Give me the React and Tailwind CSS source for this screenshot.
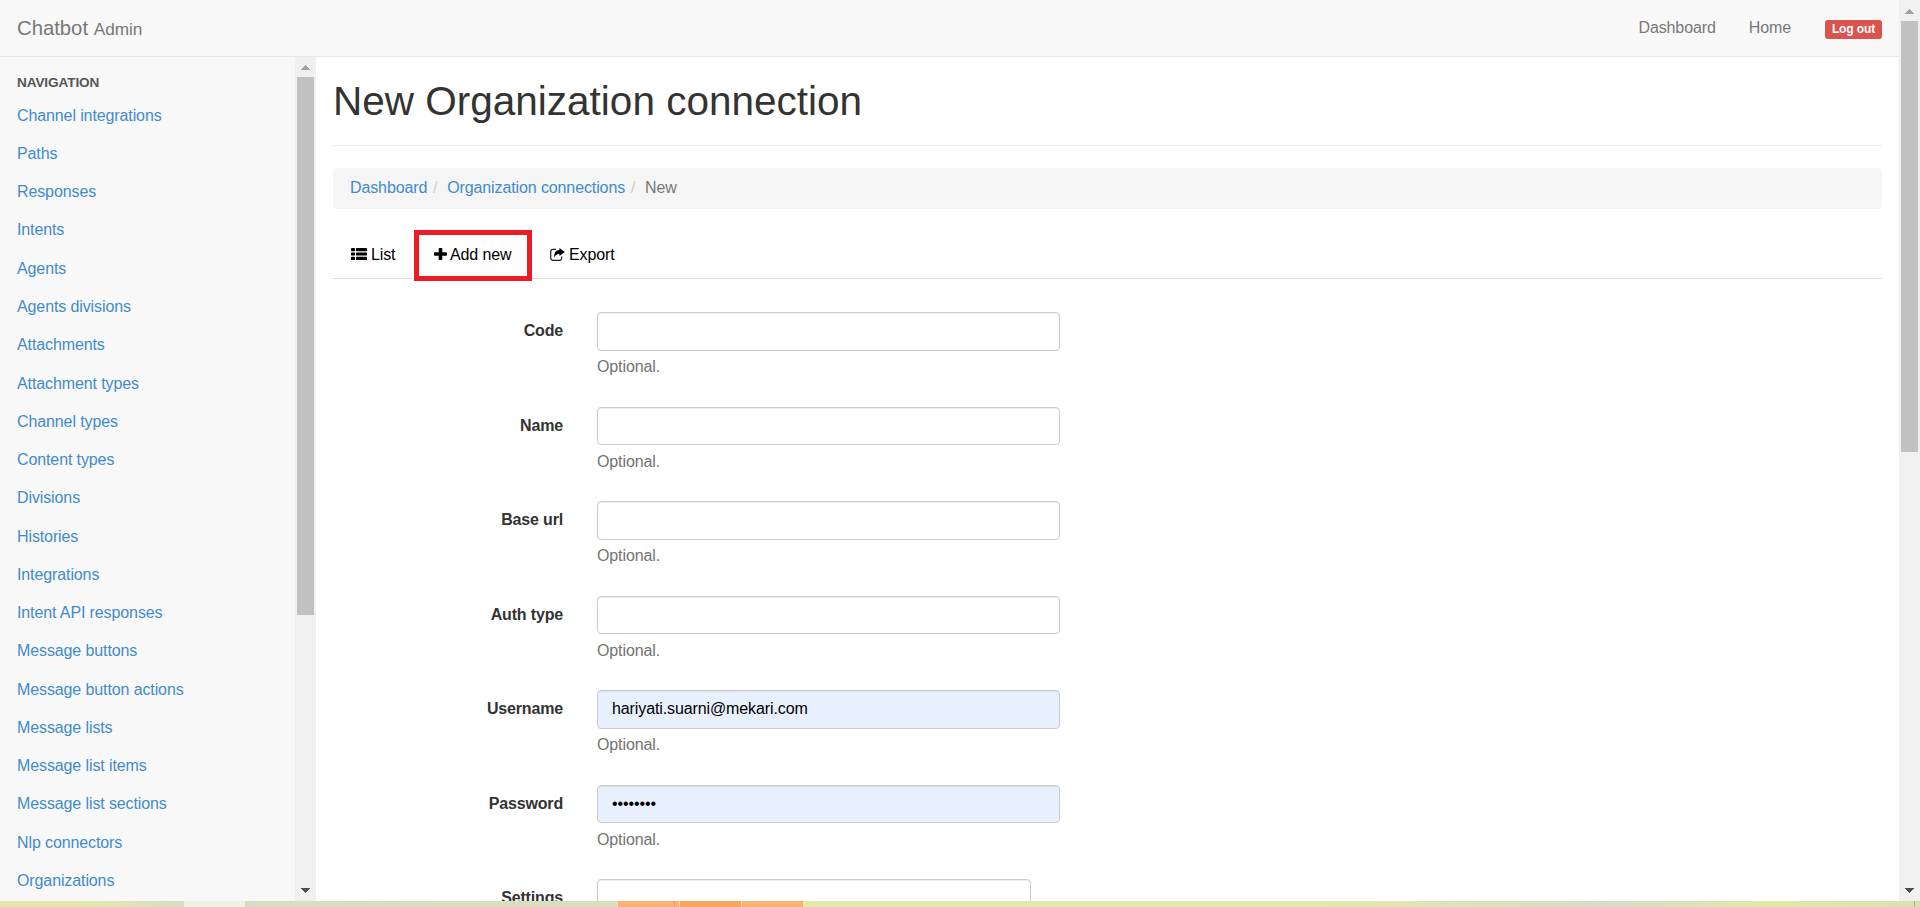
const NAV_ITEMS = [
  'Channel integrations', 'Paths', 'Responses', 'Intents', 'Agents', 'Agents divisions',
  'Attachments', 'Attachment types', 'Channel types', 'Content types', 'Divisions',
  'Histories', 'Integrations', 'Intent API responses', 'Message buttons',
  'Message button actions', 'Message lists', 'Message list items',
  'Message list sections', 'Nlp connectors', 'Organizations',
];

const FIELDS = [
  { label: 'Code' },
  { label: 'Name' },
  { label: 'Base url' },
  { label: 'Auth type' },
  { label: 'Username', type: 'text', value: 'hariyati.suarni@mekari.com' },
  { label: 'Password', type: 'password', value: 'password' },
];

function ScrollArrow({ down }) {
  return (
    <svg width="9" height="5" viewBox="0 0 9 5" className="block" shapeRendering="crispEdges">
      {down ? (
        <path d="M0 0h9v1h-9zM1 1h7v1h-7zM2 2h5v1h-5zM3 3h3v1h-3zM4 4h1v1h-1z" fill="#505050" />
      ) : (
        <path d="M4 0h1v1h-1zM3 1h3v1h-3zM2 2h5v1h-5zM1 3h7v1h-7zM0 4h9v1h-9z" fill="#a3a3a3" />
      )}
    </svg>
  );
}

function Scrollbar({ thumbClass, topClass }) {
  return (
    <div className="flex w-[21px] shrink-0 flex-col items-center bg-[#f0f0f0]">
      <div className={`flex w-full justify-center ${topClass}`}>
        <ScrollArrow />
      </div>
      <div className={`w-[17px] bg-[#c1c1c1] ${thumbClass}`} />
      <div className="mt-auto mb-2">
        <ScrollArrow down />
      </div>
    </div>
  );
}

function ListIcon() {
  return (
    <svg width="16" height="12" viewBox="0 0 16 12" fill="#000">
      <rect x="0" y="0" width="4" height="3.200" rx="0.6" />
      <rect x="5" y="0" width="11" height="3.200" rx="0.6" />
      <rect x="0" y="4.400" width="4" height="3.200" rx="0.6" />
      <rect x="5" y="4.400" width="11" height="3.200" rx="0.6" />
      <rect x="0" y="8.800" width="4" height="3.200" rx="0.6" />
      <rect x="5" y="8.800" width="11" height="3.200" rx="0.6" />
    </svg>
  );
}

function PlusIcon() {
  return (
    <svg width="13" height="12" viewBox="0 0 13 12" fill="#000">
      <path d="M5.500 0h2q.8 0 .8.8v3.400h3.900q.8 0 .8.8v2q0 .8-.8.8H8.300v3.400q0 .8-.8.8h-2q-.8 0-.8-.8V7.800H.8Q0 7.800 0 7V5q0-.8.8-.8h3.900V.8q0-.8.8-.8z" />
    </svg>
  );
}

function ShareIcon() {
  return (
    <svg width="15" height="13" viewBox="0 0 15 13" fill="none">
      <path d="M6 1.300H3.200Q.7 1.300.7 3.800v6q0 2.500 2.500 2.500h6q2.500 0 2.500-2.500V8.600" stroke="#222" strokeWidth="1.200" />
      <path d="M9.400 0l5.400 3.900-5.400 4.200V5.900C7.500 5.800 5.700 6.700 4.400 9.500 3.700 5 5.600 2.300 9.400 2.100z" fill="#000" />
    </svg>
  );
}

export default function App() {
  return (
    <div className="flex h-[907px] w-[1920px] flex-col overflow-hidden bg-white font-['Liberation_Sans',Arial,sans-serif] text-[16px] leading-[22px] tracking-[-0.11px] text-[#333]">
      <div className="flex h-[901px] overflow-hidden">
        <div className="flex w-[1899px] flex-col">
          <header className="flex h-[57px] shrink-0 items-start justify-between border-b border-[#e7e7e7] bg-[#f8f8f8] pr-[17px] pl-[17px] text-[#777]">
            <div className="pt-[17px] text-[20.300px] tracking-normal">
              Chatbot <small className="text-[17.200px]">Admin</small>
            </div>
            <nav className="flex pt-[17px]">
              <a className="mr-[33px]">Dashboard</a>
              <a className="mr-[34px]">Home</a>
              <span className="mt-[3px] h-[19px] w-[57px] rounded-[3px] bg-[#d9534f] text-center text-[12px] leading-[18px] font-bold text-white">
                Log out
              </span>
            </nav>
          </header>

          <div className="flex min-h-0 flex-1">
            <aside className="flex w-[316px] shrink-0 bg-[#f8f8f8]">
              <div className="flex-1 overflow-hidden pl-[17px]">
                <div className="pt-[15px] text-[13.600px] leading-[22px] font-bold text-[#555] uppercase">Navigation</div>
                <ul className="pt-[2.700px]">
                  {NAV_ITEMS.map((item) => (
                    <li key={item} className="h-[38.270px] leading-[38px] text-[#428bca]">
                      {item}
                    </li>
                  ))}
                </ul>
              </div>
              <Scrollbar topClass="pt-2 pb-[7px]" thumbClass="h-[538px]" />
            </aside>

            <main className="flex-1 overflow-hidden pr-[17px] pl-[17px]">
              <div className="h-[89px] border-b border-[#eee] pt-[22px]">
                <h1 className="text-[40.500px] leading-[44px] tracking-normal">New Organization connection</h1>
              </div>

              <ol className="mt-[22px] flex h-[41px] rounded-[4px] bg-[#f5f5f5] pt-[9px] pl-[17px] leading-[22px]">
                <li className="text-[#428bca]">Dashboard</li>
                <li className="px-[5.600px] text-[#ccc]">/&nbsp;</li>
                <li className="text-[#428bca]">Organization connections</li>
                <li className="px-[5.600px] text-[#ccc]">/&nbsp;</li>
                <li className="text-[#777]">New</li>
              </ol>

              <div className="mt-[21px] flex h-[49px] border-b border-[#ddd] text-black">
                <a className="flex h-[48px] w-[81px] items-center gap-[4px] pl-[18px]">
                  <ListIcon />
                  <span className="pt-[2px]">List</span>
                </a>
                <a className="relative z-10 flex h-[51px] w-[118px] items-center gap-[3px] border-[5px] border-[#ed1c24] pb-[3px] pl-[15px]">
                  <PlusIcon />
                  <span className="pt-[2px] whitespace-nowrap">Add new</span>
                </a>
                <a className="flex h-[48px] items-center gap-[4px] pl-[18px]">
                  <ShareIcon />
                  <span className="pt-[2px]">Export</span>
                </a>
              </div>

              <form className="pt-[33px]">
                {FIELDS.map(({ label, type, value }) => (
                  <div key={label} className="flex h-[94.500px]">
                    <label className="w-[230px] pt-[8.400px] text-right font-bold tracking-[-0.16px]">{label}</label>
                    <div className="ml-[34px] w-[463px]">
                      <input
                        type={type || 'text'}
                        defaultValue={value}
                        className={`block h-[38.800px] w-full rounded-[4px] border border-[#ccc] px-[14px] tracking-[-0.11px] text-black shadow-[inset_0_1px_1px_rgba(0,0,0,0.075)] ${value ? 'bg-[#e8f0fe]' : 'bg-white'}`}
                      />
                      <p className="pt-[5.600px] text-[#737373]">Optional.</p>
                    </div>
                  </div>
                ))}
                <div className="flex">
                  <label className="w-[230px] pt-[8px] text-right font-bold tracking-[-0.16px]">Settings</label>
                  <textarea className="ml-[34px] h-[60px] w-[434px] resize-none rounded-[4px] border border-[#ccc] bg-white shadow-[inset_0_1px_1px_rgba(0,0,0,0.075)]" />
                </div>
              </form>
            </main>
          </div>
        </div>
        <Scrollbar topClass="pt-[9px] pb-[7px]" thumbClass="h-[431px]" />
      </div>

      <div className="flex h-[6px]">
        <div className="w-[184px] bg-linear-to-r from-[#e3e8a9] from-45% to-[#d8dcc4]" />
        <div className="w-[61px] bg-[#eff1e4]" />
        <div className="w-[373px] bg-linear-to-r from-[#d9ddc0] to-[#dadfbf]" />
        <div className="w-[56px] bg-[#fab272]" />
        <div className="w-px bg-[#e5a062]" />
        <div className="w-[4px] bg-[#fab272]" />
        <div className="w-px bg-[#fcd9b8]" />
        <div className="w-[61px] bg-[#fba55a]" />
        <div className="w-px bg-[#fcd9b8]" />
        <div className="w-[61px] bg-[#fab272]" />
        <div className="w-[517px] bg-[#e3e9a8]" />
        <div className="w-[280px] bg-linear-to-r from-[#e3e9a8] to-[#d8dcc8]" />
        <div className="w-[170px] bg-linear-to-r from-[#d8dcc8] to-[#e1e8a5]" />
        <div className="w-[144px] bg-linear-to-r from-[#e1e8a5] to-[#dce0b4]" />
        <div className="w-px bg-[#b0b387]" />
        <div className="flex-1 bg-[#dce0b0]" />
      </div>
    </div>
  );
}
